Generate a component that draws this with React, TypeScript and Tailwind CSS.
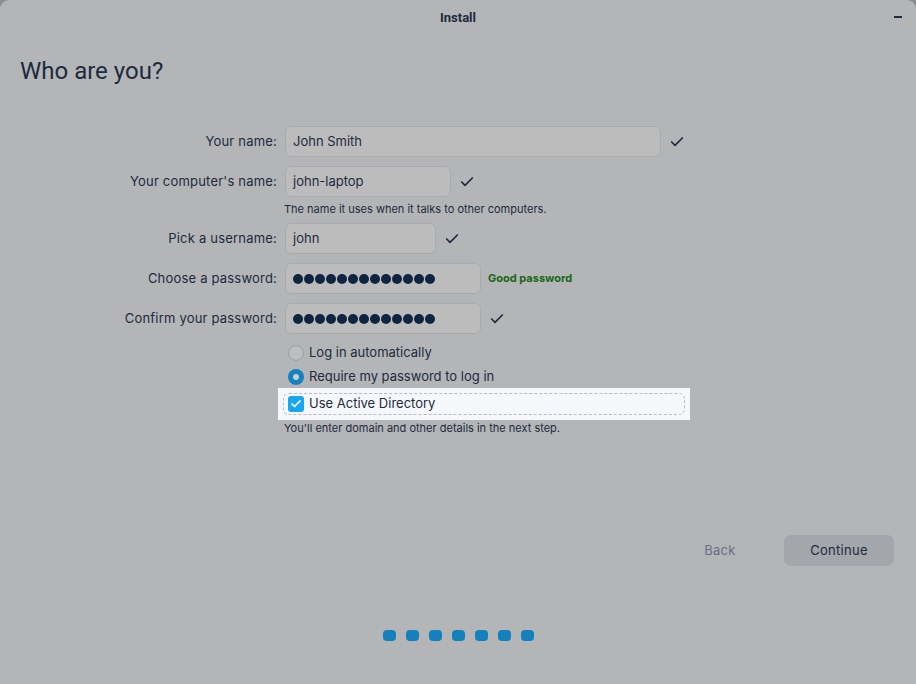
import { Check } from "lucide-react"

const ink = "text-[#1d2b3e]"

function Tick() {
  return <Check className="ml-[8px] h-[16px] w-[16px] text-[#1d2b3e]" strokeWidth={2.5} />
}

function Dots() {
  return (
    <div className="flex gap-[1px]">
      {Array.from({ length: 13 }).map((_, i) => (
        <span key={i} className="h-[10px] w-[10px] rounded-full bg-[#0f2440]" />
      ))}
    </div>
  )
}

function Field({ label, width, children, after }: { label: string; width: string; children: React.ReactNode; after?: React.ReactNode }) {
  return (
    <div className="flex items-center">
      <div className="w-[285px] pr-[8px] text-right text-[13px] tracking-[0.2px]">{label}</div>
      <div className={`flex h-[31px] items-center rounded-[6px] border border-[#a8aaad] bg-[#bcbcbd] px-[7px] text-[13px] ${width}`}>
        {children}
      </div>
      {after}
    </div>
  )
}

export default function App() {
  return (
    <div className="h-[684px] w-[916px] bg-[#8c8d8f]" style={{ fontFamily: "Inter, 'Noto Sans', sans-serif" }}>
      <div className={`flex h-full flex-col rounded-t-[9px] bg-[#b4b5b7] ${ink}`}>
        <div className="relative flex h-[34px] items-center justify-center pt-[2px]">
          <span className="text-[13px] font-bold" style={{ fontFamily: "Roboto, sans-serif" }}>Install</span>
          <span className="absolute right-[14px] top-[16px] h-[2px] w-[8px] bg-[#1d2b3e]" />
        </div>

        <h1 className="mt-[21px] pl-[20px] text-[24px] leading-[32px]" style={{ fontFamily: "Roboto, sans-serif" }}>
          Who are you?
        </h1>

        <div className="mt-[39px] flex flex-col">
          <Field label="Your name:" width="w-[376px]" after={<Tick />}>John Smith</Field>
          <div className="mt-[9px]">
            <Field label="Your computer's name:" width="w-[166px]" after={<Tick />}>john-laptop</Field>
          </div>
          <div className="ml-[284px] mt-[5px] text-[11px] leading-[14px]">
            The name it uses when it talks to other computers.
          </div>
          <div className="mt-[7px]">
            <Field label="Pick a username:" width="w-[151px]" after={<Tick />}>john</Field>
          </div>
          <div className="mt-[9px]">
            <Field
              label="Choose a password:"
              width="w-[196px]"
              after={<span className="ml-[7px] text-[11px] font-bold text-[#176617]">Good password</span>}
            >
              <Dots />
            </Field>
          </div>
          <div className="mt-[9px]">
            <Field label="Confirm your password:" width="w-[196px]" after={<Tick />}>
              <Dots />
            </Field>
          </div>

          <div className="ml-[278px] mt-[10px] flex w-[412px] flex-col text-[13px]">
            <label className="flex h-[18px] items-center gap-[5px] px-[10px]">
              <span className="h-[16px] w-[16px] rounded-full border border-[#9c9ea1] bg-[#bcbdbe]" />
              Log in automatically
            </label>
            <label className="mt-[6px] flex h-[18px] items-center gap-[5px] px-[10px]">
              <span className="flex h-[16px] w-[16px] items-center justify-center rounded-full bg-[#1382be]">
                <span className="h-[6px] w-[6px] rounded-full bg-[#c8cdd2]" />
              </span>
              Require my password to log in
            </label>
            <div className="mt-[2px] bg-[#f6f7fa] p-[5px]">
              <label className="flex h-[22px] items-center gap-[5px] rounded-[6px] border border-dashed border-[#b5bac3] px-[4px]">
                <span className="flex h-[16px] w-[16px] items-center justify-center rounded-[3px] bg-[#18a6ef]">
                  <Check className="h-[12px] w-[12px] text-white" strokeWidth={3.5} />
                </span>
                Use Active Directory
              </label>
            </div>
          </div>
          <div className="ml-[284px] mt-[1px] text-[11px] leading-[14px]">
            You'll enter domain and other details in the next step.
          </div>
        </div>

        <div className="mt-[100px] flex justify-end gap-[9px] pr-[22px] text-[13px]">
          <button className="h-[31px] w-[110px] text-[#667085] tracking-[0.3px]">Back</button>
          <button className="h-[31px] w-[110px] rounded-[7px] bg-[#a3a6aa] tracking-[0.3px]">Continue</button>
        </div>

        <div className="mt-[64px] flex justify-center gap-[10px]">
          {Array.from({ length: 7 }).map((_, i) => (
            <span key={i} className="h-[11px] w-[13px] rounded-[4px] bg-[#1381bd]" />
          ))}
        </div>
      </div>
    </div>
  )
}
